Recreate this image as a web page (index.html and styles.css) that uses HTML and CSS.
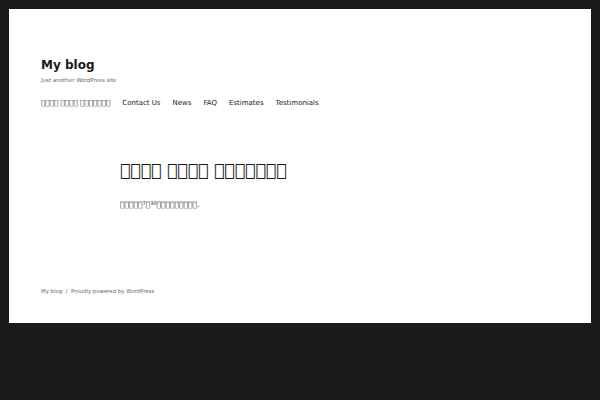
FILE: index.html
```html
<!DOCTYPE html>
<html lang="ko">
<head>
<meta charset="utf-8">
<title>My blog</title>
<link rel="stylesheet" href="styles.css">
</head>
<body>
<div class="site">
  <header class="site-header">
    <p class="site-title"><a href="#">My blog</a></p>
    <p class="site-description">Just another WordPress site</p>
    <nav class="main-nav">
      <a href="#" class="tofu-link">&#xE000;&#xE000;&#xE000;&#xE000; &#xE000;&#xE000;&#xE000;&#xE000; &#xE000;&#xE000;&#xE000;&#xE000;&#xE000;&#xE000;&#xE000;</a>
      <a href="#">Contact Us</a>
      <a href="#">News</a>
      <a href="#">FAQ</a>
      <a href="#">Estimates</a>
      <a href="#">Testimonials</a>
    </nav>
  </header>
  <main class="site-main">
    <h1 class="entry-title">&#xE000;&#xE000;&#xE000;&#xE000; &#xE000;&#xE000;&#xE000;&#xE000; &#xE000;&#xE000;&#xE000;&#xE000;&#xE000;&#xE000;&#xE000;</h1>
    <p class="entry-content">&#xE000;&#xE000;&#xE000;&#xE000;&#xE000;<span class="num">7</span>&#xE000;<span class="num">30</span>&#xE000;&#xE000;&#xE000;&#xE000;&#xE000;&#xE000;&#xE000;&#xE000;&#xE000;.</p>
  </main>
  <footer class="site-footer">
    <a href="#">My blog</a><span class="sep">/</span><a href="#">Proudly powered by WordPress</a>
  </footer>
</div>
</body>
</html>
```
FILE: styles.css
```css
html, body { margin: 0; padding: 0; }
body {
  background: #1a1a1a;
  padding: 9px;
  font-family: "DejaVu Sans", sans-serif;
  color: #1a1a1a;
}
a { color: inherit; text-decoration: none; }
.site {
  background: #fff;
  height: 314px;
  box-sizing: border-box;
  padding: 0 32px;
  display: flex;
  flex-direction: column;
}
.site-header { padding-top: 47px; }
.site-title {
  margin: 0;
  font-size: 12px;
  font-weight: bold;
  line-height: 18px;
}
.site-description {
  margin: 2px 0 0;
  font-size: 5.5px;
  line-height: 8px;
  color: #686868;
}
.main-nav {
  margin-top: 14px;
  display: flex;
  gap: 12px;
  font-size: 7px;
  line-height: 10px;
}
.tofu-link { font-size: 7.2px; }
.site-main { padding: 50px 0 0 79px; }
.entry-title {
  margin: 0;
  font-size: 17.3px;
  font-weight: normal;
  line-height: 24px;
}
.entry-content {
  margin: 16px 0 0;
  font-size: 7.5px;
  line-height: 10px;
}
.num { font-size: 5px; vertical-align: 2px; }
.site-footer {
  margin-top: auto;
  padding-bottom: 28px;
  font-size: 5.4px;
  line-height: 8px;
  color: #686868;
}
.sep { margin: 0 3.5px; }
```
